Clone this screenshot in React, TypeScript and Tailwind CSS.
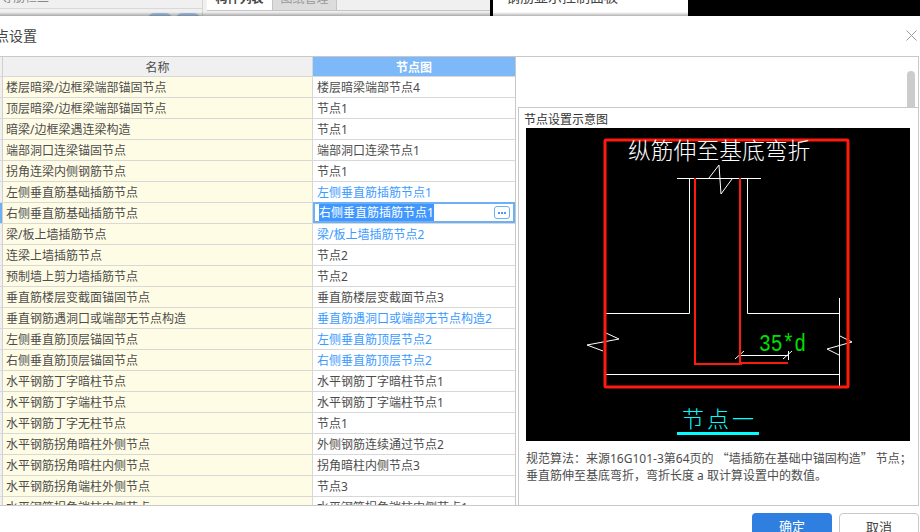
import React from "react"

type Row = { name: string; node: string; custom?: boolean; selected?: boolean }

const rows: Row[] = [
  { name: "楼层暗梁/边框梁端部锚固节点", node: "楼层暗梁端部节点4" },
  { name: "顶层暗梁/边框梁端部锚固节点", node: "节点1" },
  { name: "暗梁/边框梁遇连梁构造", node: "节点1" },
  { name: "端部洞口连梁锚固节点", node: "端部洞口连梁节点1" },
  { name: "拐角连梁内侧钢筋节点", node: "节点1" },
  { name: "左侧垂直筋基础插筋节点", node: "左侧垂直筋插筋节点1", custom: true },
  { name: "右侧垂直筋基础插筋节点", node: "右侧垂直筋插筋节点1", selected: true },
  { name: "梁/板上墙插筋节点", node: "梁/板上墙插筋节点2", custom: true },
  { name: "连梁上墙插筋节点", node: "节点2" },
  { name: "预制墙上剪力墙插筋节点", node: "节点2" },
  { name: "垂直筋楼层变截面锚固节点", node: "垂直筋楼层变截面节点3" },
  { name: "垂直钢筋遇洞口或端部无节点构造", node: "垂直筋遇洞口或端部无节点构造2", custom: true },
  { name: "左侧垂直筋顶层锚固节点", node: "左侧垂直筋顶层节点2", custom: true },
  { name: "右侧垂直筋顶层锚固节点", node: "右侧垂直筋顶层节点2", custom: true },
  { name: "水平钢筋丁字暗柱节点", node: "水平钢筋丁字暗柱节点1" },
  { name: "水平钢筋丁字端柱节点", node: "水平钢筋丁字端柱节点1" },
  { name: "水平钢筋丁字无柱节点", node: "节点1" },
  { name: "水平钢筋拐角暗柱外侧节点", node: "外侧钢筋连续通过节点2" },
  { name: "水平钢筋拐角暗柱内侧节点", node: "拐角暗柱内侧节点3" },
  { name: "水平钢筋拐角端柱外侧节点", node: "节点3" },
  { name: "水平钢筋拐角端柱内侧节点", node: "水平钢筋拐角端柱内侧节点1" },
]

// background app peeking out above the dialog
const TopStrip = () => {
  return (
    <div className="relative flex h-4 shrink-0 overflow-hidden bg-[#f0f0f0] text-[12px]">
      <div className="flex h-4 w-[203px] shrink-0 flex-col border-r border-[#d4d4d4]">
        <div className="-mt-[11px] h-5 shrink-0 border-b border-[#d8d8d8] pl-px leading-[18px] text-[#888]">
          等筋栏二
        </div>
        <div className="flex justify-end gap-1 pr-[2px] pt-1">
          <div className="h-3 w-6 rounded-t-md bg-[#a9c6e6]" />
          <div className="h-3 w-6 rounded-t-md bg-[#a9c6e6]" />
        </div>
      </div>
      <div className="flex w-[287px] shrink-0 flex-col pl-[4px]">
        <div className="flex h-[11px] shrink-0 border-b border-[#c4c4c4]">
          <div className="-mt-[11px] h-[21px] w-[65px] bg-white text-center font-bold leading-5 text-[#444]">
            构件列表
          </div>
          <div className="-mt-[11px] h-[21px] w-[65px] border-x border-[#c4c4c4] bg-[#dcdcdc] text-center leading-5 text-[#999]">
            图纸管理
          </div>
        </div>
      </div>
      <div className="w-[3px] shrink-0 bg-black" />
      <div className="-mt-[13px] h-[29px] w-[195px] shrink-0 bg-white pl-[13px] text-[14px] leading-5 text-[#444]">
        钢筋显示控制面板
      </div>
      <div className="flex-1 bg-black" />
      <div className="absolute inset-x-0 bottom-0 h-1 bg-gradient-to-b from-transparent to-black/30" />
    </div>
  )
}

const TableRow = ({ row }: { row: Row }) => {
  return (
    <div className="flex h-[21px] shrink-0 border-b border-[#d8d8d8] text-[12px] leading-[22px] text-[#4d4d4d]">
      <div
        className={`w-[3px] shrink-0 border-r border-[#d0d0d0] ${
          row.selected ? "bg-[#6cb0f5]" : "bg-[#f0f0f0]"
        }`}
      />
      <div className="w-[310px] shrink-0 border-r border-[#d8d8d8] bg-[#fffce6] pl-[3px]">
        {row.name}
      </div>
      {row.selected ? (
        <div className="-mt-px flex h-[21px] flex-1 items-center justify-between border-2 border-[#6cb0f5] bg-white pl-[4px] pr-[3px]">
          <span className="bg-[#3f97ff] leading-[17px] text-white">{row.node}</span>
          <span className="flex h-[13px] w-4 items-center justify-center gap-px rounded-[3px] border border-[#6cb0f5]">
            <span className="h-[2px] w-[2px] bg-[#4b9bf0]" />
            <span className="h-[2px] w-[2px] bg-[#4b9bf0]" />
            <span className="h-[2px] w-[2px] bg-[#4b9bf0]" />
          </span>
        </div>
      ) : (
        <div className={`flex-1 pl-[4px] ${row.custom ? "text-[#3b9bff]" : ""}`}>{row.node}</div>
      )}
    </div>
  )
}

const NodeTable = () => {
  return (
    <div className="flex h-full w-[516px] shrink-0 flex-col overflow-hidden border-r border-[#c8c8c8]">
      <div className="flex h-5 shrink-0 border-b border-[#d8d8d8] text-[12px] leading-[21px]">
        <div className="w-[3px] shrink-0 border-r border-[#d0d0d0] bg-[#f0f0f0]" />
        <div className="w-[310px] shrink-0 border-r border-[#d8d8d8] bg-[#f0f0f0] text-center text-[#4d4d4d]">
          名称
        </div>
        <div className="flex-1 bg-[#7db8f8] text-center font-bold text-white">节点图</div>
      </div>
      {rows.map((row) => (
        <TableRow key={row.name} row={row} />
      ))}
    </div>
  )
}

// CAD style sketch of the rebar anchor, coordinates are the picture's own
const NodeDiagram = () => {
  return (
    <svg width="384" height="313" viewBox="526 128 384 313" className="block bg-black">
      <g fill="none" stroke="#fff" strokeWidth="1">
        <path d="M677 178.5H761" />
        <path d="M709 178L719 165L721 194L732 179" />
        <path d="M689.5 178V313.5H606" />
        <path d="M747.5 178V313.5H839" />
        <path d="M839.5 298V387" />
        <path d="M606 374.5H839" />
        <path d="M606 333L619 339L587 345L603 351" />
        <path d="M840 336L852 342L827 349L839 355" />
        <path d="M740 355.5H788" />
        <path d="M735 359L744 351M783 359L792 351M788.5 351V360" />
      </g>
      <g fill="none" stroke="#ff1a0d">
        <rect x="605" y="140" width="243" height="247" rx="1" strokeWidth="3" />
        <path d="M695 178V364H742" strokeWidth="2" />
        <path d="M740 178V363H788" strokeWidth="2" />
      </g>
      <text x="628" y="159" fill="#fff" fontSize="22.8" className="font-light">
        纵筋伸至基底弯折
      </text>
      <text
        x="759"
        y="351"
        fill="#00e000"
        fontSize="23"
        fontFamily="'Liberation Mono', monospace"
        textLength="47"
        lengthAdjust="spacingAndGlyphs"
      >
        35*d
      </text>
      <text x="682" y="427" fill="#00ffff" fontSize="22" letterSpacing="3" className="font-light">
        节点一
      </text>
      <rect x="677" y="432" width="82" height="3" fill="#00ffff" />
    </svg>
  )
}

const PreviewPanel = () => {
  return (
    <div className="flex h-full min-w-0 flex-1 flex-col">
      <div className="flex h-[50px] shrink-0 justify-end pr-[3px] pt-[14px]">
        <div className="h-9 w-2 rounded-t-md bg-[#cccccc]" />
      </div>
      <div className="ml-[2px] flex-1 border-l border-t border-[#c8c8c8] bg-white pl-[7px]">
        <div className="-ml-[2px] h-5 text-[12px] leading-6 text-[#333]">节点设置示意图</div>
        <NodeDiagram />
        <div className="mt-2 w-[386px] text-[12px] leading-[17px] text-[#4d4d4d]">
          <div>
            规范算法：来源16G101-3第64页的{" "}
            <span className="font-['Noto_Sans_CJK_SC']">“</span>
            墙插筋在基础中锚固构造
            <span className="font-['Noto_Sans_CJK_SC']">”</span>{" "}
            节点；
          </div>
          <div>垂直筋伸至基底弯折，弯折长度 a 取计算设置中的数值。</div>
        </div>
      </div>
    </div>
  )
}

const App = () => {
  return (
    <div className="flex h-[532px] w-[920px] flex-col overflow-hidden bg-white font-['Noto_Sans','Noto_Sans_CJK_SC',sans-serif]">
      <TopStrip />
      <div className="flex h-10 shrink-0 items-center justify-between pb-[2px] pr-[3px]">
        <span className="-ml-[19px] text-[14px] text-[#444]">节点设置</span>
        <svg width="11" height="11" viewBox="0 0 11 11" fill="none" stroke="#999" strokeWidth="1">
          <path d="M0.5 0.5L10.5 10.5M10.5 0.5L0.5 10.5" />
        </svg>
      </div>
      <div className="mr-px flex h-[450px] shrink-0 border-y border-r border-[#c8c8c8]">
        <NodeTable />
        <PreviewPanel />
      </div>
      <div className="flex flex-1 justify-end gap-[7px] overflow-hidden pr-px pt-[7px]">
        <div className="h-[30px] w-20 shrink-0 rounded bg-[#2e7fe0] text-center text-[13px] leading-[26px] text-white">
          确定
        </div>
        <div className="h-[30px] w-20 shrink-0 rounded border border-[#c8c8c8] bg-white text-center text-[13px] leading-[26px] text-[#444]">
          取消
        </div>
      </div>
    </div>
  )
}

export default App
